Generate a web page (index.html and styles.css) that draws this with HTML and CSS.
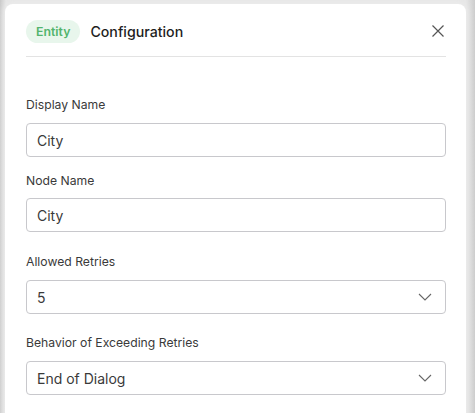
FILE: index.html
```html
<!DOCTYPE html>
<html>
<head>
<meta charset="utf-8">
<link rel="stylesheet" href="styles.css">
</head>
<body>
<div class="panel">
  <div class="header">
    <span class="badge">Entity</span>
    <span class="title">Configuration</span>
    <svg class="close" width="14" height="14" viewBox="0 0 14 14"><path d="M1.5 1.5 L12.5 12.5 M12.5 1.5 L1.5 12.5" stroke="#555" stroke-width="1.2" fill="none"/></svg>
  </div>
  <div class="form">
    <div class="field f1">
      <div class="label">Display Name</div>
      <div class="input">City</div>
    </div>
    <div class="field f2">
      <div class="label">Node Name</div>
      <div class="input">City</div>
    </div>
    <div class="field f3">
      <div class="label">Allowed Retries</div>
      <div class="input select">5<svg class="chev" width="14" height="8" viewBox="0 0 14 8"><path d="M1 1 L7 7 L13 1" stroke="#666" stroke-width="1.1" fill="none"/></svg></div>
    </div>
    <div class="field f4">
      <div class="label">Behavior of Exceeding Retries</div>
      <div class="input select">End of Dialog<svg class="chev" width="14" height="8" viewBox="0 0 14 8"><path d="M1 1 L7 7 L13 1" stroke="#666" stroke-width="1.1" fill="none"/></svg></div>
    </div>
  </div>
</div>
</body>
</html>
```

FILE: styles.css
```css
html, body {
  margin: 0;
  padding: 0;
  height: 413px;
  overflow: hidden;
}
body {
  background: linear-gradient(to right, #c9c9c9 0px, #e6e6e6 6px, #e6e6e6 466px, #cdcdcd 475px);
  font-family: Inter, "Noto Sans", sans-serif;
  color: #222;
  padding: 4px 9px 0 5px;
  box-sizing: border-box;
  width: 475px;
}
.panel {
  background: #fff;
  border-radius: 8px 8px 0 0;
  height: 430px;
  box-shadow: 0 0 6px 2px #ececec;
  padding: 0 20px 0 21px;
}
.header {
  display: flex;
  align-items: center;
  height: 52px;
  border-bottom: 1px solid #e3e3e3;
}
.badge {
  background: #e8f6ec;
  color: #52b46d;
  font-size: 12.3px;
  font-weight: 600;
  border-radius: 12px;
  height: 23px;
  line-height: 23px;
  padding: 0 10px;
  margin-top: 2px;
}
.title {
  font-size: 14.2px;
  font-weight: 500;
  margin-left: 10px;
  margin-top: 2px;
  color: #1e1e1e;
}
.close {
  margin-left: auto;
  margin-right: 1px;
  margin-top: 2px;
}
.form {
  padding-top: 39px;
}
.label {
  font-size: 12.2px;
  color: #3a3a3a;
  line-height: 18px;
}
.input {
  height: 34px;
  border: 1px solid #c8c8cc;
  border-radius: 4px;
  box-sizing: border-box;
  padding: 0 10px;
  font-size: 14px;
  color: #3a3a3a;
  display: flex;
  align-items: center;
}
.select .chev {
  margin-left: auto;
  margin-right: 3px;
}
.f1 .label { margin-bottom: 9px; }
.f2 { margin-top: 15px; }
.f2 .label { margin-bottom: 8px; }
.f3 { margin-top: 21px; }
.f3 .label { margin-bottom: 9px; }
.f4 { margin-top: 20px; }
.f4 .label { margin-bottom: 9px; }
```
